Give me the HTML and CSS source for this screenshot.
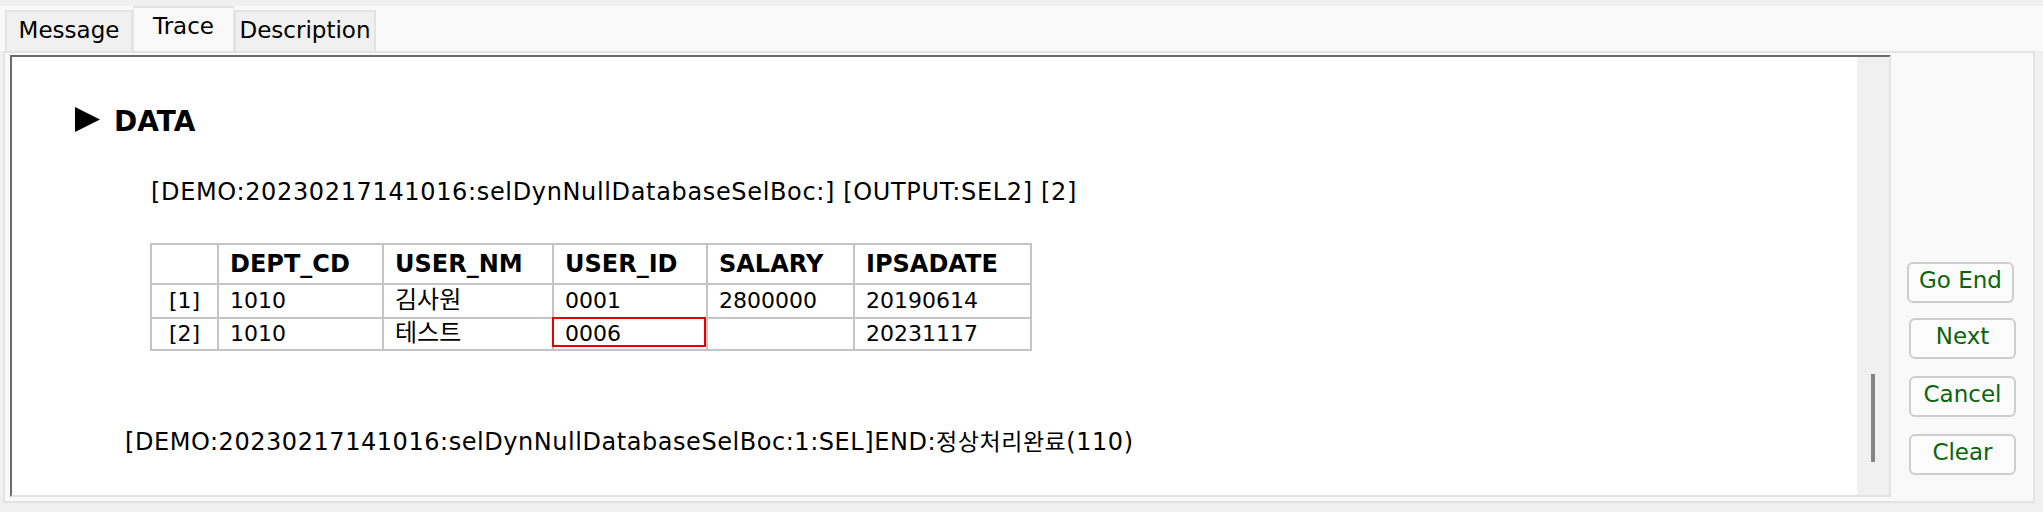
FILE: index.html
```html
<!DOCTYPE html>
<html lang="ko">
<head>
<meta charset="utf-8">
<title>Trace</title>
<link rel="stylesheet" href="styles.css">
</head>
<body>
<div class="app">
  <div class="tabs">
    <div class="tab tab-message">Message</div>
    <div class="tab tab-trace active">Trace</div>
    <div class="tab tab-desc">Description</div>
  </div>
  <div class="page">
    <div class="textbox">
      <div class="trace">
        <div class="heading">
          <svg class="tri" width="25" height="25" viewBox="0 0 25 25"><polygon points="0,0 25,12.5 0,25" fill="#000"/></svg>
          <span class="heading-text">DATA</span>
        </div>
        <div class="line1">[DEMO:20230217141016:selDynNullDatabaseSelBoc:] [OUTPUT:SEL2] [2]</div>
        <table class="grid">
          <colgroup>
            <col class="c0"><col class="c1"><col class="c2"><col class="c3"><col class="c4"><col class="c5">
          </colgroup>
          <tr class="head">
            <th></th><th>DEPT_CD</th><th>USER_NM</th><th>USER_ID</th><th>SALARY</th><th>IPSADATE</th>
          </tr>
          <tr class="row r1">
            <td class="idx">[1]</td><td>1010</td><td><span class="ko">김사원</span></td><td>0001</td><td>2800000</td><td>20190614</td>
          </tr>
          <tr class="row r2">
            <td class="idx">[2]</td><td>1010</td><td><span class="ko">테스트</span></td><td class="err">0006</td><td></td><td>20231117</td>
          </tr>
        </table>
        <div class="line2">[DEMO:20230217141016:selDynNullDatabaseSelBoc:1:SEL]END:<span class="ko2">정상처리완료</span>(110)</div>
      </div>
      <div class="vscroll"><div class="thumb"></div></div>
    </div>
    <div class="side">
      <button class="btn btn-first">Go End</button>
      <button class="btn">Next</button>
      <button class="btn">Cancel</button>
      <button class="btn">Clear</button>
    </div>
  </div>
</div>
</body>
</html>
```

FILE: styles.css
```css
html, body {
  margin: 0;
  padding: 0;
}
body {
  width: 2043px;
  height: 512px;
  background: #f0f0f0;
  font-family: "DejaVu Sans", "Noto Sans CJK KR", sans-serif;
  color: #000;
  overflow: hidden;
}
.app {
  width: 2043px;
  height: 512px;
}

/* Tabs */
.tabs {
  margin-top: 6px;
  height: 45px;
  background: #f9f9f9;
  display: flex;
  align-items: flex-end;
  padding-left: 5px;
}
.tab {
  box-sizing: border-box;
  height: 41px;
  border: 2px solid #e3e3e3;
  border-bottom: none;
  background: #f0f0f0;
  font-size: 23px;
  line-height: 26px;
  padding-top: 5px;
  text-align: center;
  white-space: nowrap;
}
.tab-message { width: 128px; }
.tab-trace { width: 101px; }
.tab-desc { width: 142px; }
.tab.active {
  height: 45px;
  background: #f9f9f9;
  padding-top: 5px;
  border-left: 1px solid #e6e6e6;
  border-right: 1px solid #e6e6e6;
}

/* Page */
.page {
  box-sizing: border-box;
  margin-left: 3px;
  width: 2032px;
  height: 452px;
  border: 2px solid #e3e3e3;
  background: #f9f9f9;
  padding: 2px 0 0 5px;
  display: flex;
  align-items: flex-start;
}
.textbox {
  box-sizing: border-box;
  width: 1881px;
  height: 442px;
  border-top: 2px solid #6b6b6b;
  border-left: 2px solid #6b6b6b;
  border-right: 2px solid #e2e2e2;
  border-bottom: 2px solid #e2e2e2;
  display: flex;
  background: #fff;
}
.trace {
  flex: 1;
  background: #fff;
  padding-top: 48px;
}
.vscroll {
  width: 32px;
  background: #f0f0f0;
  display: flex;
  flex-direction: column;
}
.thumb {
  margin-top: 317px;
  margin-left: 14px;
  width: 4px;
  height: 88px;
  background: #858585;
}

/* Trace content */
.heading {
  display: flex;
  align-items: flex-start;
  margin-left: 63px;
  height: 34px;
}
.tri {
  display: block;
  margin-top: 2px;
}
.heading-text {
  margin-left: 14px;
  font-size: 28px;
  font-weight: bold;
  line-height: 34px;
}
.line1 {
  margin-top: 38px;
  margin-left: 139px;
  font-size: 24px;
  letter-spacing: 0.65px;
  line-height: 30px;
  white-space: nowrap;
}
.grid {
  margin-top: 36px;
  margin-left: 138px;
  border-collapse: separate;
  border-spacing: 0;
  table-layout: fixed;
  width: 882px;
  border-top: 2px solid #c4c4c4;
  border-left: 2px solid #c4c4c4;
}
.c0 { width: 67px; }
.c1 { width: 165px; }
.c2 { width: 170px; }
.c3 { width: 154px; }
.c4 { width: 147px; }
.c5 { width: 177px; }
.grid th,
.grid td {
  box-sizing: border-box;
  border-right: 2px solid #c4c4c4;
  border-bottom: 2px solid #c4c4c4;
  padding: 0 0 0 11px;
  text-align: left;
  white-space: nowrap;
  vertical-align: top;
}
.grid th {
  font-size: 24px;
  font-weight: bold;
  line-height: 38px;
}
.grid td {
  font-size: 22px;
  line-height: 32px;
}
.grid .r2 td {
  line-height: 30px;
}
.grid td.idx {
  text-align: center;
  padding: 0;
}
.grid td.err {
  position: relative;
}
.grid td.err::after {
  content: "";
  position: absolute;
  left: -2px;
  top: -2px;
  right: 0;
  bottom: 2px;
  border: 2px solid #e80000;
}
.ko {
  font-size: 24px;
  line-height: 1;
}
.line2 {
  margin-top: 76px;
  margin-left: 113px;
  font-size: 24px;
  letter-spacing: 0.55px;
  line-height: 30px;
  white-space: nowrap;
}
.ko2 {
  font-size: 23px;
  line-height: 1;
}

/* Side buttons */
.side {
  flex: 1;
  align-self: stretch;
  display: flex;
  flex-direction: column;
  justify-content: flex-end;
  gap: 17px;
  padding: 0 0 26px 18px;
}
.btn {
  box-sizing: border-box;
  width: 107px;
  height: 41px;
  border: 2px solid #cdcdcd;
  border-radius: 6px;
  background: #fcfcfc;
  color: #0a640a;
  font-family: "DejaVu Sans", sans-serif;
  font-size: 23px;
  line-height: 26px;
  padding: 0 0 5px 0;
  margin: 0;
  display: flex;
  align-items: center;
  justify-content: center;
}
.btn-first {
  margin-left: -2px;
  margin-bottom: -2px;
}
```
